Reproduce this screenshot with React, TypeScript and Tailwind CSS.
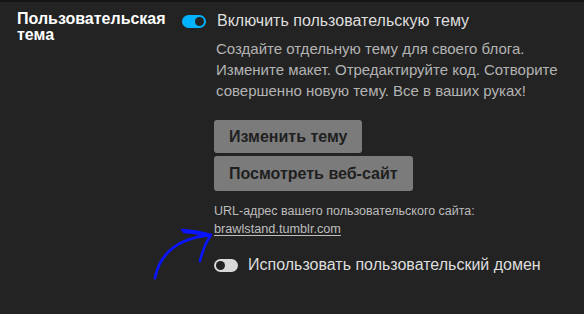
import React from "react";

const Toggle: React.FC<{ on?: boolean }> = ({ on }) => (
  <span
    className={
      on
        ? "relative inline-flex h-[13px] w-[24px] shrink-0 items-center justify-end rounded-full bg-[#00b2ff] pr-[2px]"
        : "relative inline-flex h-[13px] w-[24px] shrink-0 items-center justify-start rounded-full bg-[#d9d9d9] pl-[2px]"
    }
  >
    <span className="h-[9px] w-[9px] rounded-full bg-[#222222]" />
  </span>
);

const Arrow: React.FC = () => (
  <svg
    className="absolute left-[148px] top-[222px]"
    width="70"
    height="60"
    viewBox="148 222 70 60"
    fill="none"
  >
    <path
      d="M155 276 C 160 250, 180 236, 210 233"
      stroke="#0a14ff"
      strokeWidth="2.8"
      strokeLinecap="round"
    />
    <path
      d="M182 228 C 195 229, 204 231, 211 233 M184 230 C 196 231, 204 232, 210 234"
      stroke="#0a14ff"
      strokeWidth="2.4"
      strokeLinecap="round"
    />
    <path
      d="M210 234 C 205 242, 202 250, 200 259"
      stroke="#0a14ff"
      strokeWidth="2.6"
      strokeLinecap="round"
    />
  </svg>
);

export default function App() {
  return (
    <div className="relative h-[314px] w-[584px] overflow-hidden border-t-2 border-[#141414] bg-[#232323] font-['Liberation_Sans',Arial,sans-serif]">
      <div className="flex pt-[9px]">
        <div className="w-[182px] shrink-0 pl-[17px] text-[16px] font-bold leading-[16px] text-white">
          Пользовательская
          <br />
          тема
        </div>
        <div className="flex flex-col">
          <div className="flex items-center gap-[11px] pt-[1px]">
            <Toggle on />
            <span className="text-[16px] leading-[18px] text-[#dedede]">
              Включить пользовательскую тему
            </span>
          </div>
          <p className="mt-[8px] pl-[34px] text-[15px] leading-[21px] text-[#b3b3b3]">
            Создайте отдельную тему для своего блога.
            <br />
            Измените макет. Отредактируйте код. Сотворите
            <br />
            совершенно новую тему. Все в ваших руках!
          </p>
          <div className="mt-[19px] flex flex-col items-start gap-[3px] pl-[32px]">
            <button className="h-[33px] rounded-[3px] bg-[#7b7b7b] px-[15px] text-[16px] font-bold text-[#1f1f1f]">
              Изменить тему
            </button>
            <button className="h-[35px] rounded-[3px] bg-[#7b7b7b] px-[15px] text-[16px] font-bold text-[#1f1f1f]">
              Посмотреть веб-сайт
            </button>
          </div>
          <div className="mt-[12px] pl-[32px] text-[12.5px] leading-[17px] text-[#bdbdbd]">
            URL-адрес вашего пользовательского сайта:
          </div>
          <a className="mt-[1px] ml-[32px] self-start text-[12.7px] leading-[17px] text-[#bdbdbd] underline underline-offset-2">
            brawlstand.tumblr.com
          </a>
          <div className="mt-[18px] flex items-center gap-[10px] pl-[32px]">
            <Toggle />
            <span className="text-[16px] leading-[18px] text-[#dedede]">
              Использовать пользовательский домен
            </span>
          </div>
        </div>
      </div>
      <Arrow />
    </div>
  );
}
